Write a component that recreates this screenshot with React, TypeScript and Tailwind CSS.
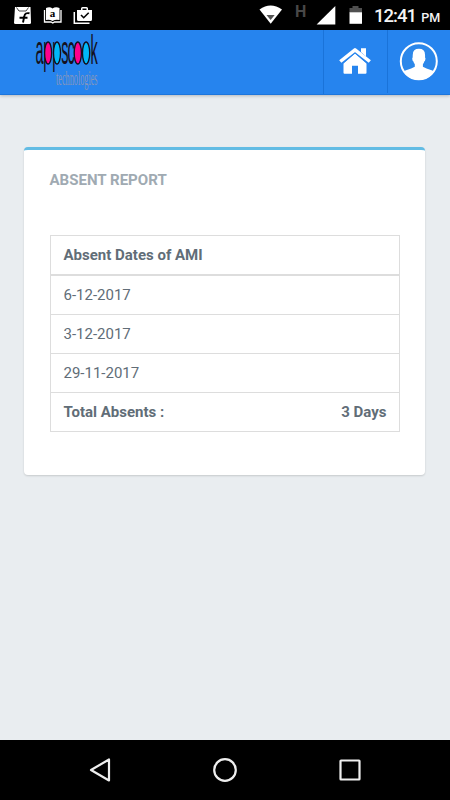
import React from "react";

const dates = ["6-12-2017", "3-12-2017", "29-11-2017"];

function StatusBar() {
  return (
    <div className="h-[30px] w-full bg-black">
      <svg width="450" height="30" viewBox="0 0 450 30" fontFamily="Roboto, sans-serif">
        <g>
          <path d="M15 7h15.500l.5 15.500q0 1.500-1.500 1.500h-14q-1.500 0-1.500-1.500z" fill="#fff" />
          <path d="M16.500 7.500 19 11h7l2.500-3.500" fill="none" stroke="#333" strokeWidth=".9" />
          <path d="M29.500 13.300q-4.500-1-5.200 3l-1.300 6.200M19.500 17.700h8" fill="none" stroke="#000" strokeWidth="1.900" />
        </g>
        <g>
          <path d="M46 8q4-1.500 6.500.5 3-2 7-.5v12q-4-1-7 1-3-2-6.500-1z" fill="#fff" />
          <path d="M44.500 10v12h6.500l1.800 1 1.700-1h6.500V10" fill="none" stroke="#fff" strokeWidth="1.300" />
          <text x="49.700" y="16.500" fontSize="11" fontWeight="700" fontFamily="Liberation Serif, serif" fill="#000">a</text>
        </g>
        <g>
          <path d="M74.300 12v11.300H89.500" fill="none" stroke="#fff" strokeWidth="1.500" />
          <path fillRule="evenodd" d="M77 10h4V8.500Q81 7 82.500 7h4Q88 7 88 8.500V10h4v9.500q0 1.500-1.500 1.500h-12Q77 21 77 19.500zM82.500 8.500V10h4V8.500z" fill="#fff" />
          <path d="m81 15 2.700 2.700 5-5" fill="none" stroke="#000" strokeWidth="1.600" />
        </g>
        <path d="M259.500 9.500Q270.500 1.500 282 9.500L270.700 23.700z" fill="#fff" />
        <path d="M266.500 15h8.200l-4.100 5z" fill="#555" />
        <text x="295" y="16.500" fontSize="16" fontWeight="700" fill="#484848">H</text>
        <path d="M335.300 6v18.500h-18.700z" fill="#fff" />
        <path d="M349.500 8h3V6h6v2h3.500v5h-12.500z" fill="#505050" />
        <path d="M349.500 12.300H362v11.500h-12.500z" fill="#fff" />
        <text x="374" y="22" fontSize="18.500" fontWeight="500" textLength="43" fill="#f4f4f4">12:41</text>
        <text x="421.300" y="22" fontSize="12.300" fontWeight="500" textLength="19" lengthAdjust="spacingAndGlyphs" fill="#f4f4f4">PM</text>
      </svg>
    </div>
  );
}

function Logo() {
  return (
    <svg className="ml-8 overflow-visible" width="72" height="65" viewBox="32 30 72 65">
      <g transform="translate(0 64) scale(1 2.800)">
        <text x="35.400 43.300 52.200 61.200 67.500 73.700 82 90.500" y="0" fontSize="14.500" fontFamily="Liberation Sans, sans-serif" fill="#141020">appscook</text>
      </g>
      <g stroke="#141020" strokeWidth="1.300">
        <ellipse cx="48.100" cy="53" rx="3.500" ry="11" fill="#ff008c" />
        <ellipse cx="57" cy="53" rx="3.500" ry="11" fill="#00b8f8" />
        <ellipse cx="77.800" cy="53" rx="3.600" ry="11" fill="#ff008c" />
        <ellipse cx="86.100" cy="53" rx="3.600" ry="11" fill="#00b8f8" />
      </g>
      <g transform="translate(56 85) scale(1 2.400)">
        <text x="0" y="0" fontSize="8.300" textLength="41.500" lengthAdjust="spacingAndGlyphs" fontFamily="Liberation Serif, serif" fill="#8396bd">technologies</text>
      </g>
    </svg>
  );
}

function Header() {
  return (
    <header className="flex h-[65px] border-b border-[#1d76dc] bg-[#2684ee] shadow-[0_1px_3px_rgba(0,0,0,0.22)]">
      <Logo />
      <div className="ml-auto flex w-[64px] justify-center border-l border-[#1a73d9]">
        <svg width="63" height="64" viewBox="324 30 63 64">
          <path d="M343.500 63.300 355 53.500l11.500 9.800v9.500q0 1-1 1h-7.500v-8h-6v8h-7.500q-1 0-1-1z" fill="#fff" />
          <path d="M361 48.600h5v8.500l-5-4.500z" fill="#fff" />
          <path d="m340 63 15-13L370 63" fill="none" stroke="#2684ee" strokeWidth="5" />
          <path d="m340.300 61.500 14.700-11.700 14.800 11.700" fill="none" stroke="#fff" strokeWidth="3.500" strokeLinejoin="round" />
          <path d="M361 48.600h5v7.500l-5-4z" fill="#fff" />
        </svg>
      </div>
      <div className="h-[63px] w-[63px] border-l border-[#1a73d9]">
        <svg width="62" height="63" viewBox="388 30 62 63">
          <circle cx="418.800" cy="61.300" r="18" fill="#2b87ea" stroke="#fff" strokeWidth="2" />
          <path d="M412.800 54.500q0-5.700 6.100-5.700t6.100 5.700q.2 1.500 0 3 .8 0 .3 2.200-.3 1.500-.9 1.600-.4 1.600-1.500 2.900v2.600q4 2.200 6.500 2.600 3.500.8 4.800 2.400-5.500 8-15.400 8t-15.300-8q1.300-1.600 4.800-2.400 2.500-.4 6.500-2.600v-2.600q-1.100-1.300-1.500-2.900-.6-.1-.9-1.600-.5-2.200.3-2.200-.1-1.500.1-3z" fill="#fff" />
        </svg>
      </div>
    </header>
  );
}

function Report() {
  return (
    <section className="mr-[25px] ml-6 mt-[52px] h-[328px] rounded-[4px] border-t-[3px] border-[#62bce4] bg-white pr-[25px] pl-[26px] pt-[20px] shadow-[0_1px_2px_rgba(0,0,0,0.15)]">
      <h1 className="-ml-[0.500px] h-[20px] text-[15.060px] leading-[20px] font-bold text-[#a0aab2]">ABSENT REPORT</h1>
      <div className="mt-[45px] border border-[#dddddd] text-[15px] leading-[20px] text-[#616d77]">
        <div className="flex h-[40px] items-center border-b-2 border-[#dddddd] px-[12.500px] font-bold">Absent Dates of AMI</div>
        {dates.map((date) => (
          <div key={date} className="flex h-[39px] items-center border-b border-[#dddddd] px-[12.500px]">{date}</div>
        ))}
        <div className="flex h-[38px] items-center justify-between px-[12.500px] font-bold">
          <span>Total Absents :</span>
          <span>3 Days</span>
        </div>
      </div>
    </section>
  );
}

function NavigationBar() {
  return (
    <nav className="h-[60px] bg-black">
      <svg width="450" height="60" viewBox="0 740 450 60" fill="none" stroke="#eee" strokeWidth="2.200">
        <path d="M91 770 109 759.500v21z" strokeLinejoin="round" />
        <circle cx="225" cy="770" r="10.800" />
        <rect x="340.500" y="760.500" width="19" height="19" rx=".5" />
      </svg>
    </nav>
  );
}

export default function App() {
  return (
    <div className="flex h-[800px] w-[450px] flex-col overflow-hidden bg-[#e9edf0] font-['Roboto',sans-serif]">
      <StatusBar />
      <Header />
      <main className="flex-1">
        <Report />
      </main>
      <NavigationBar />
    </div>
  );
}
